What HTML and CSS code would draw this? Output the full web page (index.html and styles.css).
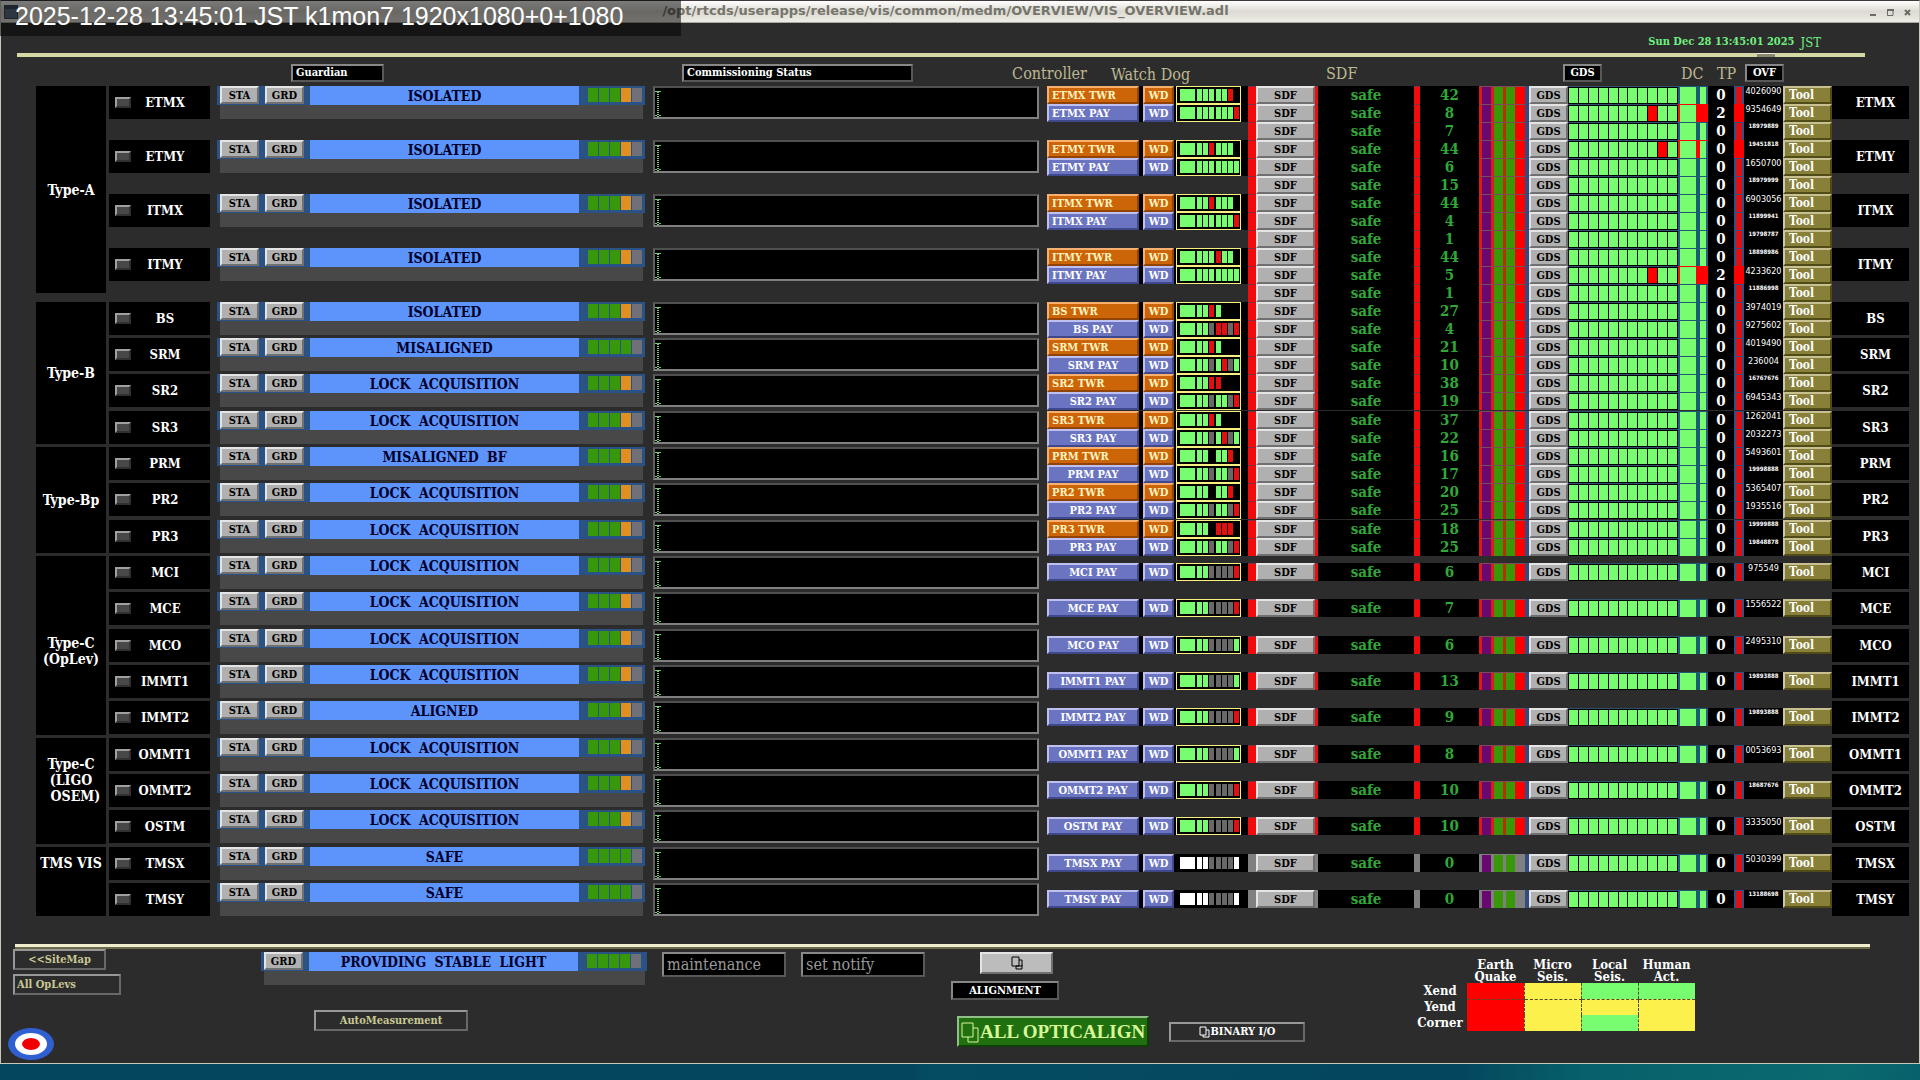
FILE: index.html
```html
<!DOCTYPE html>
<html lang="en">
<head>
<meta charset="utf-8">
<title>/opt/rtcds/userapps/release/vis/common/medm/OVERVIEW/VIS_OVERVIEW.adl</title>
<link rel="stylesheet" href="styles.css">
</head>
<body>
<div class="stamp">2025-12-28 13:45:01 JST k1mon7 1920x1080+0+1080</div>
<main class="window">
  <header class="titlebar">
    <span class="titlebar-icon"></span>
    <h1 class="titlebar-text">/opt/rtcds/userapps/release/vis/common/medm/OVERVIEW/VIS_OVERVIEW.adl</h1>
    <div class="titlebar-controls">
      <button aria-label="Minimize"><svg width="7" height="8" viewBox="0 0 7 8"><path d="M0 6h6v2H0z" fill="#6b6b64"/></svg></button>
      <button aria-label="Maximize"><svg width="7" height="8" viewBox="0 0 7 8"><path d="M.5 2V7.500h5.500V2" fill="none" stroke="#6b6b64"/><path d="M0 1h7v2H0z" fill="#6b6b64"/></svg></button>
      <button aria-label="Close"><svg width="7" height="8" viewBox="0 0 7 8"><path d="M1 2l5 5M6 2L1 7" fill="none" stroke="#6b6b64" stroke-width="2"/></svg></button>
    </div>
  </header>

  <div class="clock"><time>Sun Dec 28 13:45:01 2025</time><span class="zone">JST</span></div>
  <div class="rule-top"><span class="rule-nub"></span></div>

  <div class="heads">
    <div class="heads-guardian"><button class="frame frame-guardian">Guardian</button></div>
    <div class="heads-status"><button class="frame frame-status">Commissioning Status</button><span class="head head-ctl">Controller</span></div>
    <div class="heads-chan">
      <span class="head head-wd">Watch Dog</span>
      <span class="head head-sdf">SDF</span>
      <button class="frame frame-gds">GDS</button>
      <span class="head head-dc">DC</span>
      <span class="head head-tp">TP</span>
      <button class="frame frame-ovf">OVF</button>
    </div>
  </div>

  <table class="overview" id="overview">
    <colgroup><col class="c-type"><col class="c-name"><col class="c-guardian"><col class="c-status"><col class="c-chan"><col class="c-end"></colgroup>
  </table>

  <div class="rule-bottom"></div>

  <footer class="footer">
    <nav class="links">
      <button class="outline sitemap">&lt;&lt;SiteMap</button>
      <button class="outline oplevs">All OpLevs</button>
      <svg class="roundel" width="46" height="32" viewBox="0 0 46 32"><ellipse cx="23" cy="16" rx="23" ry="16" fill="#2f5fd0"/><ellipse cx="23" cy="16" rx="16" ry="11" fill="#fff"/><ellipse cx="23" cy="16" rx="9" ry="6" fill="#f00000"/></svg>
    </nav>
    <div class="laser">
      <div class="guardian guardian-laser">
        <div class="g-bar"><button class="grey g-btn">GRD</button><span class="g-state">PROVIDING STABLE LIGHT</span><span class="g-leds"><i class="g"></i><i class="g"></i><i class="g"></i><i class="g"></i><i class="x"></i></span></div>
        <div class="g-msg"></div>
      </div>
      <button class="outline automeas">AutoMeasurement</button>
    </div>
    <div class="notify">
      <button class="frame">maintenance</button>
      <button class="frame">set notify</button>
    </div>
    <div class="align">
      <button class="grey align-btn" aria-label="Alignment screens"><svg width="12" height="14" viewBox="0 0 12 14"><path d="M5 10h6V4H8M1 1h7v9H1zM5 10v3h6V9" fill="none" stroke="#000"/></svg></button>
      <span class="frame align-label">ALIGNMENT</span>
      <div class="align-row">
        <button class="opticalign"><svg width="18" height="22" viewBox="0 0 18 22"><path d="M1 2h11v14H1zM12 7h5v14H7v-5" fill="none" stroke="#d8f898"/></svg>ALL OPTICALIGN</button>
        <button class="outline binary"><svg width="11" height="12" viewBox="0 0 11 12"><path d="M1 1h6v8H1zM7 4h3v7H4V9" fill="none" stroke="#fff"/></svg>BINARY I/O</button>
      </div>
    </div>
    <table class="seis">
      <thead><tr><td></td><th scope="col">Earth<br>Quake</th><th scope="col">Micro<br>Seis.</th><th scope="col">Local<br>Seis.</th><th scope="col">Human<br>Act.</th></tr></thead>
      <tbody>
        <tr class="dash"><th scope="row">Xend</th><td class="r"></td><td class="y"></td><td class="g"></td><td class="g"></td></tr>
        <tr><th scope="row">Yend</th><td class="r"></td><td class="y"></td><td class="y"></td><td class="y"></td></tr>
        <tr><th scope="row">Corner</th><td class="r"></td><td class="y"></td><td class="g"></td><td class="y"></td></tr>
      </tbody>
    </table>
  </footer>
</main>
<script src="overview.js"></script>
</body>
</html>
```
FILE: styles.css
```css
* { box-sizing: border-box; }
body {
  margin: 0;
  min-height: 100vh;
  background: linear-gradient(100deg, #04465c 0, #04465c 52%, #054c60 53%, #04465c 78%, #07606c 84%, #0a6a70 96%, #07606c 100%);
  font-family: "DejaVu Serif Condensed", "DejaVu Serif", serif;
  font-stretch: condensed;
  font-weight: bold;
  font-size: 12px;
  color: #fff;
}
button, input { font: inherit; color: inherit; padding: 0; margin: 0; border-radius: 0; }
table { border-collapse: collapse; }
th, td { padding: 0; }

.stamp {
  position: absolute; left: 0; top: 0; z-index: 2;
  width: 681px; height: 36px; padding-left: 15px;
  background: rgba(0, 0, 0, .52);
  font: 25px/32px "Liberation Sans", sans-serif;
  white-space: nowrap;
}
.window {
  background: #2c2c2c;
  border: 1px solid #c8c8b8;
  border-top-color: #403838;
  padding-bottom: 3px;
}
.titlebar {
  display: flex; align-items: center;
  height: 22px; padding: 0 8px 0 3px;
  background: linear-gradient(#fff, #dcdad2 50%, #eeece4);
  border-bottom: 1px solid #a8a8a0;
}
.titlebar-icon { width: 14px; height: 14px; background: #5c7088; border: 1px solid #404c5c; border-top-width: 4px; }
.titlebar-text {
  flex: 1; margin: 0; padding: 0 0 1px 3px; text-align: center;
  font: bold 13px/18px "DejaVu Sans", sans-serif; color: #75756c;
}
.titlebar-controls { display: flex; gap: 10px; }
.titlebar-controls button { display: flex; border: 0; background: none; }

.clock {
  display: flex; justify-content: flex-end; gap: 6px;
  margin: 10px 98px 0 0; height: 20px; line-height: 18px;
  color: #70f080; font-size: 11px;
}
.zone { font-size: 13px; line-height: 20px; font-weight: normal; }
.rule-top { display: flex; justify-content: flex-end; height: 4px; margin: 0 54px 0 16px; background: #d4d8a4; }
.rule-nub { width: 18px; height: 4px; margin-right: 90px; background: #888870; border-top: 1px solid #f0f0e0; }

.heads { display: flex; height: 29px; align-items: center; padding: 3px 10px 0 35px; }
.heads-guardian { width: 617px; padding-left: 255px; }
.heads-status { flex: 1; display: flex; align-items: center; justify-content: space-between; padding-left: 29px; }
.heads-chan { width: 822px; display: flex; align-items: center; }
.head { color: #bcb890; font-weight: normal; font-size: 16px; white-space: nowrap; }
.frame {
  display: block; height: 18px; line-height: 14px;
  background: #000; border: 2px solid #585858; border-top-color: #888; border-left-color: #888;
  font-size: 11px; text-align: center; white-space: nowrap;
}
.frame-guardian { width: 93px; text-align: left; padding-left: 3px; }
.frame-status { width: 231px; text-align: left; padding-left: 3px; }
.head-wd { width: 239px; padding: 3px 0 0 24px; }
.head-sdf { width: 237px; }
.frame-gds { width: 39px; }
.head-dc { margin-left: 79px; width: 36px; }
.head-tp { width: 28px; }
.frame-ovf { width: 39px; }

.overview { width: calc(100% - 45px); margin: 0 10px 0 35px; table-layout: fixed; }
.overview td, .overview th { vertical-align: top; height: 36px; }
.overview .tall > td, .overview .tall > th { height: 37px; }
.overview .triple > td, .overview .triple > th { height: 54px; }
.c-type { width: 73px; } .c-name { width: 108px; } .c-guardian { width: 436px; }
.c-chan { width: 785px; } .c-end { width: 77px; }

.overview .type { height: 1px; padding: 0 3px 3px 0; }
.overview .triple .type { padding-bottom: 9px; }
.type-box {
  display: flex; align-items: center; justify-content: center;
  height: 100%; background: #000; font-size: 14px; line-height: 16px; text-align: center; font-weight: bold;
}
.type-first { align-items: flex-start; padding-top: 8px; }
.type-upper { align-items: flex-start; padding-top: 18px; }
.type-lower { padding-top: 10px; }
.name-box { display: flex; align-items: center; width: 101px; height: 33px; padding-left: 6px; background: #000; }
.name-btn { width: 16px; height: 11px; flex: none; background: #484848; border: 2px solid #303030; border-top-color: #a0a0a0; border-left-color: #a0a0a0; }
.name-text { display: flex; justify-content: center; width: 56px; margin-left: 6px; font-size: 13px; white-space: nowrap; }
.end-box { height: 33px; line-height: 33px; padding-left: 10px; background: #000; font-size: 13px; text-align: center; }

.grey { background: #b0b0b0; color: #000; border: 2px solid #707070; border-top-color: #e4e4e4; border-left-color: #e4e4e4; }
.guardian { width: 428px; }
.g-bar { display: flex; height: 19px; background: #2a5284; padding: 0 3px; }
.g-btn { width: 39px; height: 18px; line-height: 13px; font-size: 11px; font-weight: bold; }
.g-btn + .g-btn { margin-left: 6px; }
.g-state { flex: 1; margin: 0 6px; background: #5c94fc; color: #000028; font-size: 14px; line-height: 20px; text-align: center; word-spacing: 4px; white-space: nowrap; }
.g-leds { display: flex; gap: 1px; padding: 2px 0 2px 3px; }
.g-leds i { width: 10px; height: 14px; }
i.g { background: #38980c; } i.o { background: #e09020; } i.x { background: #707078; }
.g-msg { height: 14px; margin: 0 2px 0 3px; background: #484848; }

.status-box {
  display: block; width: calc(100% - 8px); height: 33px;
  border: 2px solid #808080; border-top-color: #505050; border-left-color: #606060;
  background:
    repeating-linear-gradient(#78c878 0 1px, #000 1px 2px) 2px 4px / 2px 25px no-repeat,
    linear-gradient(#78c878, #78c878) 0 3px / 6px 1px no-repeat,
    linear-gradient(#78c878, #78c878) 0 27px / 6px 1px no-repeat,
    #000;
}

.chan { display: flex; height: 18px; background: #000; font-size: 11px; line-height: 14px; }
.single { margin-top: 7px; }
.no-ctl { margin-left: 201px; }
.ctl { width: 92px; border: 2px solid #c0c0f0; border-right-color: #40488c; border-bottom-color: #40488c; background: #6a74c0; }
.ctl-left { text-align: left; padding-left: 3px; }
.wdb { width: 31px; margin: 0 2px 0 4px; border: 2px solid #c0c0f0; border-right-color: #40488c; border-bottom-color: #40488c; background: #6a74c0; }
.ctl, .wdb { line-height: 13px; white-space: nowrap; font-weight: bold; }
.twr { background: #cc6408; color: #fff4c0; border-color: #f8b070 #904408 #904408 #f8b070; }
.wd { display: flex; gap: 1px; width: 65px; margin-right: 7px; padding: 2px 0 2px 3px; border: 1px solid #f8f080; }
.wd.off { border-color: #000; }
.wd i { width: 5px; }
.wd i:first-child { width: 15px; margin-right: 1px; }
.wd i:nth-child(4) { margin-right: 1px; }
.wd .g { background: #78fc70; } .wd .r { background: #e01010; } .wd .x { background: #686868; } .wd .w { background: #fff; }
.chan .grey { padding: 0; line-height: 13px; font-weight: bold; }
.chan b { background: #f00c0c; border-top: 1px solid #803040; }
.b8 { width: 8px; } .b3 { width: 3px; } .b6 { width: 6px; }
.sdf { width: 59px; }
.safe { width: 96px; }
.count { width: 59px; }
.safe, .count { text-align: center; color: #30a838; font-size: 15px; line-height: 18px; }
.stripes {
  width: 46px; border-top: 1px solid #804858;
  background: linear-gradient(90deg, #e01818 0 3px, #680870 3px 12px, #e01818 12px 15px, #389808 15px 24px, #b83000 24px 27px, #389808 27px 36px, #fc0000 36px);
}
.idle b, .idle .stripes { border-top-color: #808080; }
.idle b { background: #808080; }
.idle .stripes { background: linear-gradient(90deg, #808080 0 3px, #680870 3px 12px, #808080 12px 15px, #389808 15px 24px, #808080 24px 27px, #389808 27px 36px, #808080 36px); }
.gds { width: 39px; margin-left: 4px; }
.gds-wrap { display: flex; background: #304c80; }
.cells { display: flex; gap: 1px; width: 110px; padding: 1px; background: #000; border-top: 1px solid #305070; }
.cells i { flex: 1; background: #78fc70; }
.cells .r { background: #f00; }
.dc { width: 30px; border-top: 1px solid #205878; background: linear-gradient(90deg, #2c5888 0 2px, #78fc70 2px 18px, #185c70 18px 22px, #78fc70 22px 28px, #2c5888 28px); }
.dc-edge { border-color: #f00; background: linear-gradient(90deg, #e02010 0 2px, #78fc70 2px 18px, #f00 18px 22px, #78fc70 22px 28px, #2c5888 28px); }
.dc-full { border-color: #f00; background: linear-gradient(90deg, #e02010 0 2px, #78fc70 2px 18px, #f00 18px); }
.tp { width: 26px; text-align: center; font-size: 15px; line-height: 18px; }
.al { width: 10px; border: solid #305088; border-width: 1px 2px 0; background: #e01010; }
.al.hot { border-color: #f00; background: #f00; }
.ovf { width: 39px; padding-top: 1px; text-align: center; font: 9px/8px "DejaVu Sans Condensed", "DejaVu Sans", sans-serif; font-stretch: condensed; }
.ovf span { display: block; }
.ovf .small { font-size: 6px; line-height: 6px; font-weight: bold; }
.tool { width: 49px; border: 2px solid #504c18; border-top-color: #c8c090; border-left-color: #c8c8b0; background: #888038; text-align: left; padding-left: 4px; line-height: 13px; font-size: 12px; }

.rule-bottom { height: 5px; margin: 25px 49px 0 14px; background: #f0ecd0; border-bottom: 2px solid #6c6c48; }

.footer { display: flex; align-items: flex-start; padding-left: 7px; height: 111px; }
.outline { display: block; background: transparent; border: 2px solid #686868; border-top-color: #989898; border-left-color: #989898; color: #c8c894; font-size: 11px; line-height: 15px; white-space: nowrap; }
.links { width: 113px; }
.sitemap { width: 93px; height: 21px; margin-left: 5px; }
.oplevs { width: 108px; height: 21px; margin: 4px 0 33px 5px; text-align: left; padding-left: 2px; }
.laser { width: 386px; margin-left: 140px; padding-top: 3px; }
.guardian-laser { width: 386px; }
.guardian-laser .g-bar { padding-right: 6px; }
.automeas { width: 154px; height: 21px; margin: 25px 0 0 53px; }
.notify { display: flex; gap: 15px; padding: 3px 0 0 15px; }
.notify .frame { width: 124px; height: 25px; padding-left: 3px; text-align: left; font-size: 16px; line-height: 20px; font-weight: normal; color: #989898; }
.align { margin-left: 26px; padding-top: 3px; }
.align-btn { display: flex; align-items: center; justify-content: center; width: 73px; height: 22px; margin-left: 29px; background: #bcbcbc; }
.align-label { width: 108px; height: 19px; margin: 7px 0 16px; line-height: 15px; }
.align-row { display: flex; align-items: center; padding-left: 6px; gap: 20px; }
.opticalign { display: flex; align-items: center; gap: 1px; width: 192px; height: 31px; padding-left: 2px; background: #207010; border: 2px solid #104008; border-top-color: #90c088; border-left-color: #90c088; color: #d8f898; font-size: 19px; white-space: nowrap; font-family: "Liberation Serif", serif; }
.opticalign svg { flex: none; }
.binary { display: flex; align-items: center; justify-content: center; gap: 1px; width: 136px; height: 20px; color: #fff; }
.seis { margin: 9px 0 0 108px; table-layout: fixed; width: 282px; }
.seis thead td { width: 54px; }
.seis th { font-size: 13px; line-height: 12px; font-weight: bold; height: 16px; }
.seis thead th { height: 25px; width: 57px; }
.seis tbody td { height: 16px; border-left: 1px dashed #504c28; }
.seis tbody td.r { border-left: 0; }
.seis .dash td { border-bottom: 1px dashed #504c28; }
.seis .r { background: #f00; } .seis .y { background: #fcf04c; } .seis .g { background: #78fc70; }
```
FILE: overview.js
```js
// One entry per channel row: [watch-dog LEDs, SDF count, TP, overflow count, fault cell, fault kind].
// A leading "~" marks an overflow count long enough to need the smaller digits.
const GROUPS = [
  { type: "Type-A", rows: [
    ["ETMX", "ISOLATED", "gggox", [["gggggr-", 42, 0, "4026090"], ["ggggggr", 8, 2, "9354649", 8, "full"], [null, 7, 0, "~18979889"]]],
    ["ETMY", "ISOLATED", "gggox", [["ggrggg-", 44, 0, "~19451818", 9, "edge"], ["ggggggg", 6, 0, "1650700"], [null, 15, 0, "~18979999"]]],
    ["ITMX", "ISOLATED", "gggox", [["ggrggg-", 44, 0, "6903056"], ["ggggggr", 4, 0, "~11899941"], [null, 1, 0, "~19798787"]]],
    ["ITMY", "ISOLATED", "gggox", [["gggrgg-", 44, 0, "~18898986"], ["ggggggg", 5, 2, "4233620", 8, "full"], [null, 1, 0, "~11886998"]]]] },
  { type: "Type-B", rows: [
    ["BS", "ISOLATED", "gggox", [["ggrg---", 27, 0, "3974019"], ["ggxrrxr", 4, 0, "9275602"]]],
    ["SRM", "MISALIGNED", "ggggx", [["ggrg---", 21, 0, "4019490"], ["ggxgrxg", 10, 0, "236004"]]],
    ["SR2", "LOCK ACQUISITION", "gggox", [["ggrr---", 38, 0, "~16767676"], ["ggxggxr", 19, 0, "6945343"]]],
    ["SR3", "LOCK ACQUISITION", "gggox", [["ggrg---", 37, 0, "1262041"], ["ggxgrxg", 22, 0, "2032273"]]]] },
  { type: "Type-Bp", rows: [
    ["PRM", "MISALIGNED BF", "gggox", [["gg-ggr-", 16, 0, "5493601"], ["ggxggxr", 17, 0, "~19998888"]]],
    ["PR2", "LOCK ACQUISITION", "gggox", [["gg-ggr-", 20, 0, "5365407"], ["ggxggxr", 25, 0, "1935516"]]],
    ["PR3", "LOCK ACQUISITION", "gggox", [["gg-rrr-", 18, 0, "~19999888"], ["ggxggxr", 25, 0, "~19848878"]]]] },
  { type: "Type-C<br>(OpLev)", place: "type-lower", rows: [
    ["MCI", "LOCK ACQUISITION", "gggox", [["ggxxxxr", 6, 0, "975549"]]],
    ["MCE", "LOCK ACQUISITION", "gggox", [["ggxxxxr", 7, 0, "1556522"]]],
    ["MCO", "LOCK ACQUISITION", "gggox", [["ggxxxxg", 6, 0, "2495310"]]],
    ["IMMT1", "LOCK ACQUISITION", "gggox", [["ggxxxxg", 13, 0, "~19893888"]]],
    ["IMMT2", "ALIGNED", "gggox", [["ggxxxxr", 9, 0, "~19893888"]]]] },
  { type: "Type-C<br>(LIGO<br>&nbsp;&nbsp;OSEM)", place: "type-upper", rows: [
    ["OMMT1", "LOCK ACQUISITION", "gggox", [["ggxxxxg", 8, 0, "0053693"]]],
    ["OMMT2", "LOCK ACQUISITION", "gggox", [["ggxxxxr", 10, 0, "~18687676"]]],
    ["OSTM", "LOCK ACQUISITION", "gggox", [["ggxxxxr", 10, 0, "3335050"]]]] },
  { type: "TMS VIS", place: "type-first", rows: [
    ["TMSX", "SAFE", "ggggx", [["wwxxxxw", 0, 0, "5030399"]]],
    ["TMSY", "SAFE", "ggggx", [["wwxxxxw", 0, 0, "~13188698"]]]] },
];

const leds = (s) => [...s].map((c) => `<i class="${c}"></i>`).join("");

function channel(name, [wd, count, tp, ovf, fault, kind], index, total) {
  const idle = name.startsWith("TMS");
  const twr = total > 1 && index === 0;
  const kindClass = twr ? "twr ctl-left" : total === 3 ? "ctl-left" : "";
  const control = wd
    ? `<button class="ctl ${kindClass}">${name} ${twr ? "TWR" : "PAY"}</button>
       <button class="wdb ${twr ? "twr" : ""}">WD</button>
       <span class="wd ${idle ? "off" : ""}">${leds(wd[0] + wd)}</span>`
    : "";
  const cells = Array.from({ length: 11 }, (_, i) => `<i${i === fault ? ' class="r"' : ""}></i>`).join("");
  return `<div class="chan ${wd ? "" : "no-ctl"} ${total === 1 ? "single" : ""} ${idle ? "idle" : ""}">${control}
    <b class="b8"></b><button class="grey sdf">SDF</button><b class="b3"></b>
    <span class="safe">safe</span><b class="b6"></b><span class="count">${count}</span>
    <span class="stripes"></span><span class="gds-wrap"><button class="grey gds">GDS</button></span>
    <span class="cells">${cells}</span><span class="dc ${kind ? "dc-" + kind : ""}"></span>
    <span class="tp">${tp}</span><span class="al ${kind ? "hot" : ""}"></span>
    <span class="ovf"><span class="${ovf[0] === "~" ? "small" : ""}">${ovf.replace("~", "")}</span></span>
    <button class="tool">Tool</button></div>`;
}

let position = 0;
const bodies = GROUPS.map(({ type, place = "", rows }) => {
  const html = rows.map(([name, state, lamps, chans], i) => {
    position += 1;
    const size = chans.length === 3 ? "triple" : position > 6 && position % 3 === 1 ? "tall" : "";
    const head = i ? "" : `<th class="type" scope="rowgroup" rowspan="${rows.length}"><div class="type-box ${place}"><span>${type}</span></div></th>`;
    return `<tr class="${size}">${head}
      <td><div class="name-box"><button class="name-btn" aria-label="Open ${name}"></button><span class="name-text">${name}</span></div></td>
      <td><div class="guardian"><div class="g-bar"><button class="grey g-btn">STA</button><button class="grey g-btn">GRD</button><span class="g-state">${state}</span><span class="g-leds">${leds(lamps)}</span></div><div class="g-msg"></div></div></td>
      <td><input class="status-box" readonly aria-label="${name} commissioning status"></td>
      <td>${chans.map((c, k) => channel(name, c, k, chans.length)).join("")}</td>
      <td><div class="end-box">${name}</div></td></tr>`;
  }).join("");
  return `<tbody>${html}</tbody>`;
}).join("");
document.getElementById("overview").insertAdjacentHTML("beforeend", bodies);
```
